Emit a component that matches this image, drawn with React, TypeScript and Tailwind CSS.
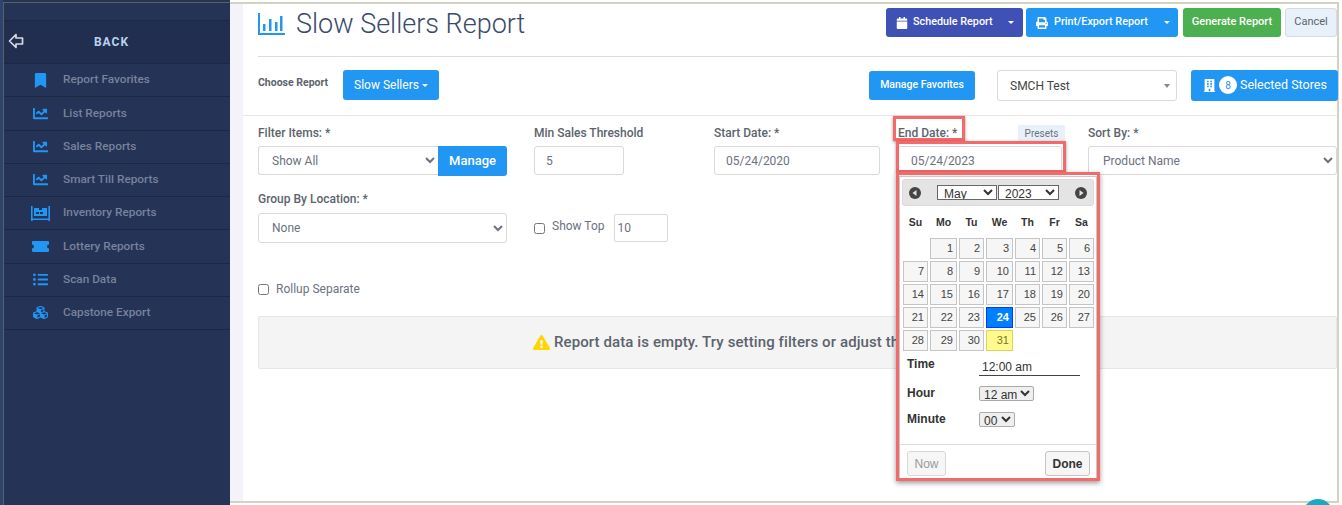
import React from "react";
import {
  FaBookmark,
  FaBuilding,
  FaCalendar,
  FaChartLine,
  FaCubes,
  FaExclamationTriangle,
  FaListUl,
  FaPrint,
} from "react-icons/fa";

function InventoryIcon() {
  return (
    <svg width="19" height="15" viewBox="0 0 19 15" fill="currentColor">
      <path d="M0 0h1.600v15H0zM17.400 0H19v15h-1.600zM0 12.400h19V14H0z" />
      <path d="M3 2h5v2h3V2h5v8H3z" />
      <path d="M5 6h3v2H5zM9 6h3v2H9z" fill="#253356" />
    </svg>
  );
}

function TicketIcon() {
  return (
    <svg width="17" height="11" viewBox="0 0 17 11" fill="currentColor">
      <path d="M1 0h15a1 1 0 0 1 1 1v2.500a2 2 0 0 0 0 4V10a1 1 0 0 1-1 1H1a1 1 0 0 1-1-1V7.500a2 2 0 0 0 0-4V1a1 1 0 0 1 1-1z" />
    </svg>
  );
}

const menu = [
  { label: "Report Favorites", icon: <FaBookmark size={15} /> },
  { label: "List Reports", icon: <FaChartLine size={15} /> },
  { label: "Sales Reports", icon: <FaChartLine size={15} /> },
  { label: "Smart Till Reports", icon: <FaChartLine size={15} /> },
  { label: "Inventory Reports", icon: <InventoryIcon /> },
  { label: "Lottery Reports", icon: <TicketIcon /> },
  { label: "Scan Data", icon: <FaListUl size={15} /> },
  { label: "Capstone Export", icon: <FaCubes size={15} /> },
];

function Sidebar() {
  return (
    <aside className="w-[230px] h-full shrink-0 bg-[#253356] border-l-[3px] border-l-[#2f4370] pt-[2px]">
      <div className="h-full border-l border-t border-[#59625f]">
        <div className="h-[18px] border-b border-b-[#1c2844]" />
        <div className="h-[43px] flex items-center relative justify-center bg-[#222e4f] border-b border-[#1c2844]">
          <svg className="absolute left-[4px] top-[12px]" width="16" height="16" viewBox="0 0 16 16" fill="none" stroke="#d5d9e0" strokeWidth="1.700">
            <path d="M8 1.500 1.500 8 8 14.500V11h6.500V5H8z" strokeLinejoin="round" />
          </svg>
          <span className="text-[12px] font-bold tracking-[1px] text-[#b9d3ee] pr-[11px]">BACK</span>
        </div>
        {menu.map((item) => (
          <div key={item.label} className="h-[33.25px] flex items-center border-b border-[#1c2844] text-[11.800px] font-medium text-[#78829c]">
            <span className="w-[34px] ml-[19px] mr-[6px] flex justify-center text-[#2196f3]">{item.icon}</span>
            {item.label}
          </div>
        ))}
      </div>
    </aside>
  );
}

function Caret() {
  return <span className="inline-block ml-[3px] align-middle border-x-[3px] border-x-transparent border-t-[3px] border-t-white" />;
}

function Label({ children }: { children: React.ReactNode }) {
  return <div className="h-[14px] mb-[6px] text-[12px] leading-[14px] font-medium text-[#5c636d]">{children}</div>;
}

const fieldClass = "border border-[#d9d9d9] rounded-[3px] bg-white text-[12px] text-[#6b7280]";

function Toolbar() {
  return (
    <div className="h-[53px] ml-[15px] flex items-start justify-between border-b border-[#dcdcdc]">
      <div className="flex items-center gap-[11px] text-[#2196f3] mt-[1px]">
        <svg width="27" height="22" viewBox="0 0 27 22" fill="currentColor">
          <path d="M0 0h2v20h25v2H0z" />
          <path d="M5 11h2.500v7H5zM11 6h2.500v12H11zM17 9h2.500v9H17zM22 3h2.500v15H22z" />
        </svg>
        <h1 className="text-[27px] leading-[38px] font-light text-[#3a4a6d]">Slow Sellers Report</h1>
      </div>
      <div className="flex items-center mt-[4px] text-[11px] font-medium text-white">
        <button className="w-[137px] h-[29px] rounded-[3px] bg-[#3f51b5] flex items-center pl-[10px] text-[10.800px]">
          <FaCalendar size={12} />
          <span className="ml-[5px]">Schedule Report</span>
          <span className="ml-auto mr-[9px] flex"><Caret /></span>
        </button>
        <button className="ml-[3px] w-[152px] h-[29px] rounded-[3px] bg-[#2196f3] flex items-center pl-[10px] text-[10.800px]">
          <FaPrint size={12} />
          <span className="ml-[6px]">Print/Export Report</span>
          <span className="ml-auto mr-[8px] flex"><Caret /></span>
        </button>
        <button className="ml-[5px] w-[98px] h-[29px] rounded-[3px] bg-[#4caf50]">Generate Report</button>
        <button className="ml-[4px] w-[52px] h-[29px] rounded-[3px] bg-[#e8f1fa] border border-[#d5dbe0] font-normal text-[#5c636d]">Cancel</button>
      </div>
    </div>
  );
}

function ReportPicker() {
  return (
    <div className="h-[59px] pl-[15px] pb-[2px] flex items-center border-b border-[#e6e6e6]">
      <span className="w-[85px] shrink-0 -mt-[4px] text-[10.500px] font-bold text-[#5c636d]">Choose Report</span>
      <button className="w-[96px] shrink-0 h-[30px] rounded-[3px] bg-[#2196f3] text-[12px] text-white">Slow Sellers<Caret /></button>
      <button className="ml-[430px] w-[106px] shrink-0 h-[29px] rounded-[3px] bg-[#2196f3] text-[10.500px] font-medium text-white">Manage Favorites</button>
      <div className="ml-[22px] w-[180px] shrink-0 h-[31px] pt-[1px] border border-[#d9d9d9] rounded-[3px] flex items-center justify-between pl-[12px] pr-[6px] text-[12px] text-[#444]">
        SMCH Test
        <span className="border-x-[3px] border-x-transparent border-t-[4px] border-t-[#888]" />
      </div>
      <button className="ml-[14px] w-[147px] shrink-0 h-[31px] rounded-[3px] bg-[#2196f3] flex items-center pl-[12px] text-[12.500px] text-white">
        <FaBuilding size={13} />
        <span className="ml-[3px] mr-[3px] w-[18px] h-[18px] rounded-full bg-white text-[#2196f3] text-[10px] flex items-center justify-center">8</span>
        Selected Stores
      </button>
    </div>
  );
}

function NavDot({ dir }: { dir: "prev" | "next" }) {
  return (
    <svg width="12" height="12" viewBox="0 0 12 12">
      <circle cx="6" cy="6" r="6" fill="#454545" />
      <path d={dir === "prev" ? "M7.500 3v6L3.500 6z" : "M4.500 3v6l4-3z"} fill="#e4e4e4" />
    </svg>
  );
}

const days = ["", ...Array.from({ length: 31 }, (_, i) => String(i + 1))];
const smallSelect = "h-[15px] bg-[#efefef] border border-[#aaa] rounded-[2px] text-[12px] leading-[13px] text-[#333]";

function Calendar() {
  return (
    <div className="absolute z-10 left-[1px] top-[50px] w-[198px] h-[304px] bg-white border border-[#c8c8c8] font-['Liberation_Sans',sans-serif] text-[#333]">
      <div className="mx-[2px] mt-[2px] h-[27px] rounded-[3px] bg-[#e4e4e4] border border-[#dadada] flex items-center justify-between px-[6px]">
        <NavDot dir="prev" />
        <div className="flex gap-[1px]">
          <select defaultValue="May" className="w-[60px] h-[15px] bg-white border border-[#666] text-[12px] leading-[13px] pl-[2px]"><option>May</option></select>
          <select defaultValue="2023" className="w-[61px] h-[15px] bg-white border border-[#666] text-[12px] leading-[13px] pl-[2px]"><option>2023</option></select>
        </div>
        <NavDot dir="next" />
      </div>
      <div className="ml-[3px] mt-[5px] grid grid-cols-[25px_27px_25px_27px_25px_25px_25px] gap-x-[2px] gap-y-[2px]">
        {["Su", "Mo", "Tu", "We", "Th", "Fr", "Sa"].map((d) => (
          <div key={d} className="h-[23px] mb-[2px] flex items-center justify-center text-[10.500px] font-bold">{d}</div>
        ))}
        {days.map((d, i) =>
          d === "" ? (
            <div key={i} />
          ) : (
            <div
              key={d}
              className={
                "h-[21px] border flex items-center justify-end pr-[3px] text-[11px] " +
                (d === "24"
                  ? "bg-[#007fff] border-[#003eff] text-white font-bold"
                  : d === "31"
                    ? "bg-[#fffa90] border-[#dad55e] text-[#777620]"
                    : "bg-[#f6f6f6] border-[#c5c5c5] text-[#454545]")
              }
            >
              {d}
            </div>
          ),
        )}
      </div>
      <div className="mt-[1px] pl-[7px] text-[12px] font-bold">
        <div className="h-[28px] flex items-start pt-[3px]">
          <span className="w-[72px]">Time</span>
          <span className="w-[101px] h-[21px] pl-[3px] pt-[3px] border-b border-[#444] font-normal">12:00 am</span>
        </div>
        <div className="h-[26px] flex items-center">
          <span className="w-[72px]">Hour</span>
          <select defaultValue="12 am" className={smallSelect + " w-[55px] font-normal"}><option>12 am</option></select>
        </div>
        <div className="h-[26px] flex items-center">
          <span className="w-[72px]">Minute</span>
          <select defaultValue="00" className={smallSelect + " w-[36px] font-normal"}><option>00</option></select>
        </div>
      </div>
      <div className="absolute left-0 right-0 bottom-0 h-[35px] pt-[3px] border-t border-[#ddd] flex items-center justify-between pl-[7px] pr-[6px] text-[12px] font-bold">
        <button className="w-[39px] h-[25px] bg-[#f6f6f6] border border-[#d8d8d8] rounded-[3px] font-normal text-[#999]">Now</button>
        <button className="w-[45px] h-[25px] bg-[#f6f6f6] border border-[#c5c5c5] rounded-[3px] text-[#333]">Done</button>
      </div>
    </div>
  );
}

function Filters() {
  return (
    <div className="pl-[15px] pt-[10px] grid grid-cols-[276px_180px_184px_190px_249px] grid-rows-[66px_84px]">
      <div>
        <Label>Filter Items: *</Label>
        <div className="flex w-[249px]">
          <select defaultValue="Show All" className={fieldClass + " h-[29px] w-full pl-[9px] rounded-r-none border-r-0"}><option>Show All</option></select>
          <button className="w-[69px] h-[30px] shrink-0 rounded-r-[3px] bg-[#2196f3] text-[13px] font-medium text-white">Manage</button>
        </div>
      </div>
      <div>
        <Label>Min Sales Threshold</Label>
        <input readOnly value="5" className={fieldClass + " h-[29px] w-[90px] px-[11px]"} />
      </div>
      <div>
        <Label>Start Date: *</Label>
        <input readOnly value="05/24/2020" className={fieldClass + " h-[29px] w-[166px] px-[11px]"} />
      </div>
      <div className="relative">
        <Label>End Date: *</Label>
        <span className="absolute left-[120px] -top-[1px] w-[47px] h-[17px] rounded-[2px] bg-[#e8f1fa] text-[10px] leading-[17px] text-center text-[#6b7280]">Presets</span>
        <input readOnly value="05/24/2023" className={fieldClass + " h-[29px] w-[164px] px-[12px]"} />
        <div className="absolute -left-[5px] -top-[10px] w-[72px] h-[25px] border-[3px] border-[#f26a6a] shadow-[0_1px_3px_rgba(0,0,0,0.4)]" />
        <div className="absolute -left-[2px] top-[15px] w-[170px] h-[32px] border-[3px] border-[#f26a6a] shadow-[0_1px_3px_rgba(0,0,0,0.4)]" />
        <Calendar />
        <div className="absolute z-20 -left-[2px] top-[46px] w-[204px] h-[309px] border-[3px] border-[#f26a6a] shadow-[0_2px_5px_rgba(0,0,0,0.4)]" />
      </div>
      <div>
        <Label>Sort By: *</Label>
        <select defaultValue="Product Name" className={fieldClass + " h-[29px] w-full pl-[10px]"}><option>Product Name</option></select>
      </div>
      <div>
        <div className="h-[14px] mb-[7px] text-[12px] leading-[14px] font-medium text-[#5c636d]">Group By Location: *</div>
        <select defaultValue="None" className={fieldClass + " h-[30px] w-[249px] pl-[9px]"}><option>None</option></select>
      </div>
      <div className="col-span-2 pt-[22px] flex items-start text-[12px] text-[#6b7280]">
        <input type="checkbox" className="w-[11px] h-[11px] mt-[9px]" />
        <span className="ml-[7px] mt-[3px]">Show Top</span>
        <input readOnly value="10" className="ml-[9px] w-[54px] h-[28px] border border-[#d9d9d9] rounded-[2px] px-[3px] text-[12px]" />
      </div>
    </div>
  );
}

export default function App() {
  return (
    <div className="w-[1342px] h-[505px] flex bg-white overflow-hidden relative font-[Roboto,sans-serif]">
      <Sidebar />
      <div className="mt-[2px] h-[501px] w-[1109px] flex border-y-2 border-r-2 border-[#d3d3c3] relative">
        <div className="w-[13px] shrink-0 bg-[#f3f3f9]" />
        <main className="flex-1 min-w-0">
          <Toolbar />
          <ReportPicker />
          <Filters />
          <label className="ml-[15px] mt-[4px] flex items-center gap-[7px] text-[12px] text-[#6b7280]">
            <input type="checkbox" className="w-[11px] h-[11px]" />
            Rollup Separate
          </label>
          <div className="ml-[15px] mt-[18px] h-[53px] bg-[#f4f4f4] border border-[#e6e6e6] rounded-[2px] flex items-center pl-[274px] text-[15px] tracking-[0.1px] font-medium text-[#5c636d] whitespace-nowrap overflow-hidden">
            <FaExclamationTriangle size={17} className="text-[#ffd600] mr-[4px]" />
            Report data is empty. Try setting filters or adjust the
          </div>
        </main>
      </div>
      <div className="absolute left-[1303px] top-[499px] w-[30px] h-[30px] rounded-full bg-[#1ea7c5]" />
    </div>
  );
}
